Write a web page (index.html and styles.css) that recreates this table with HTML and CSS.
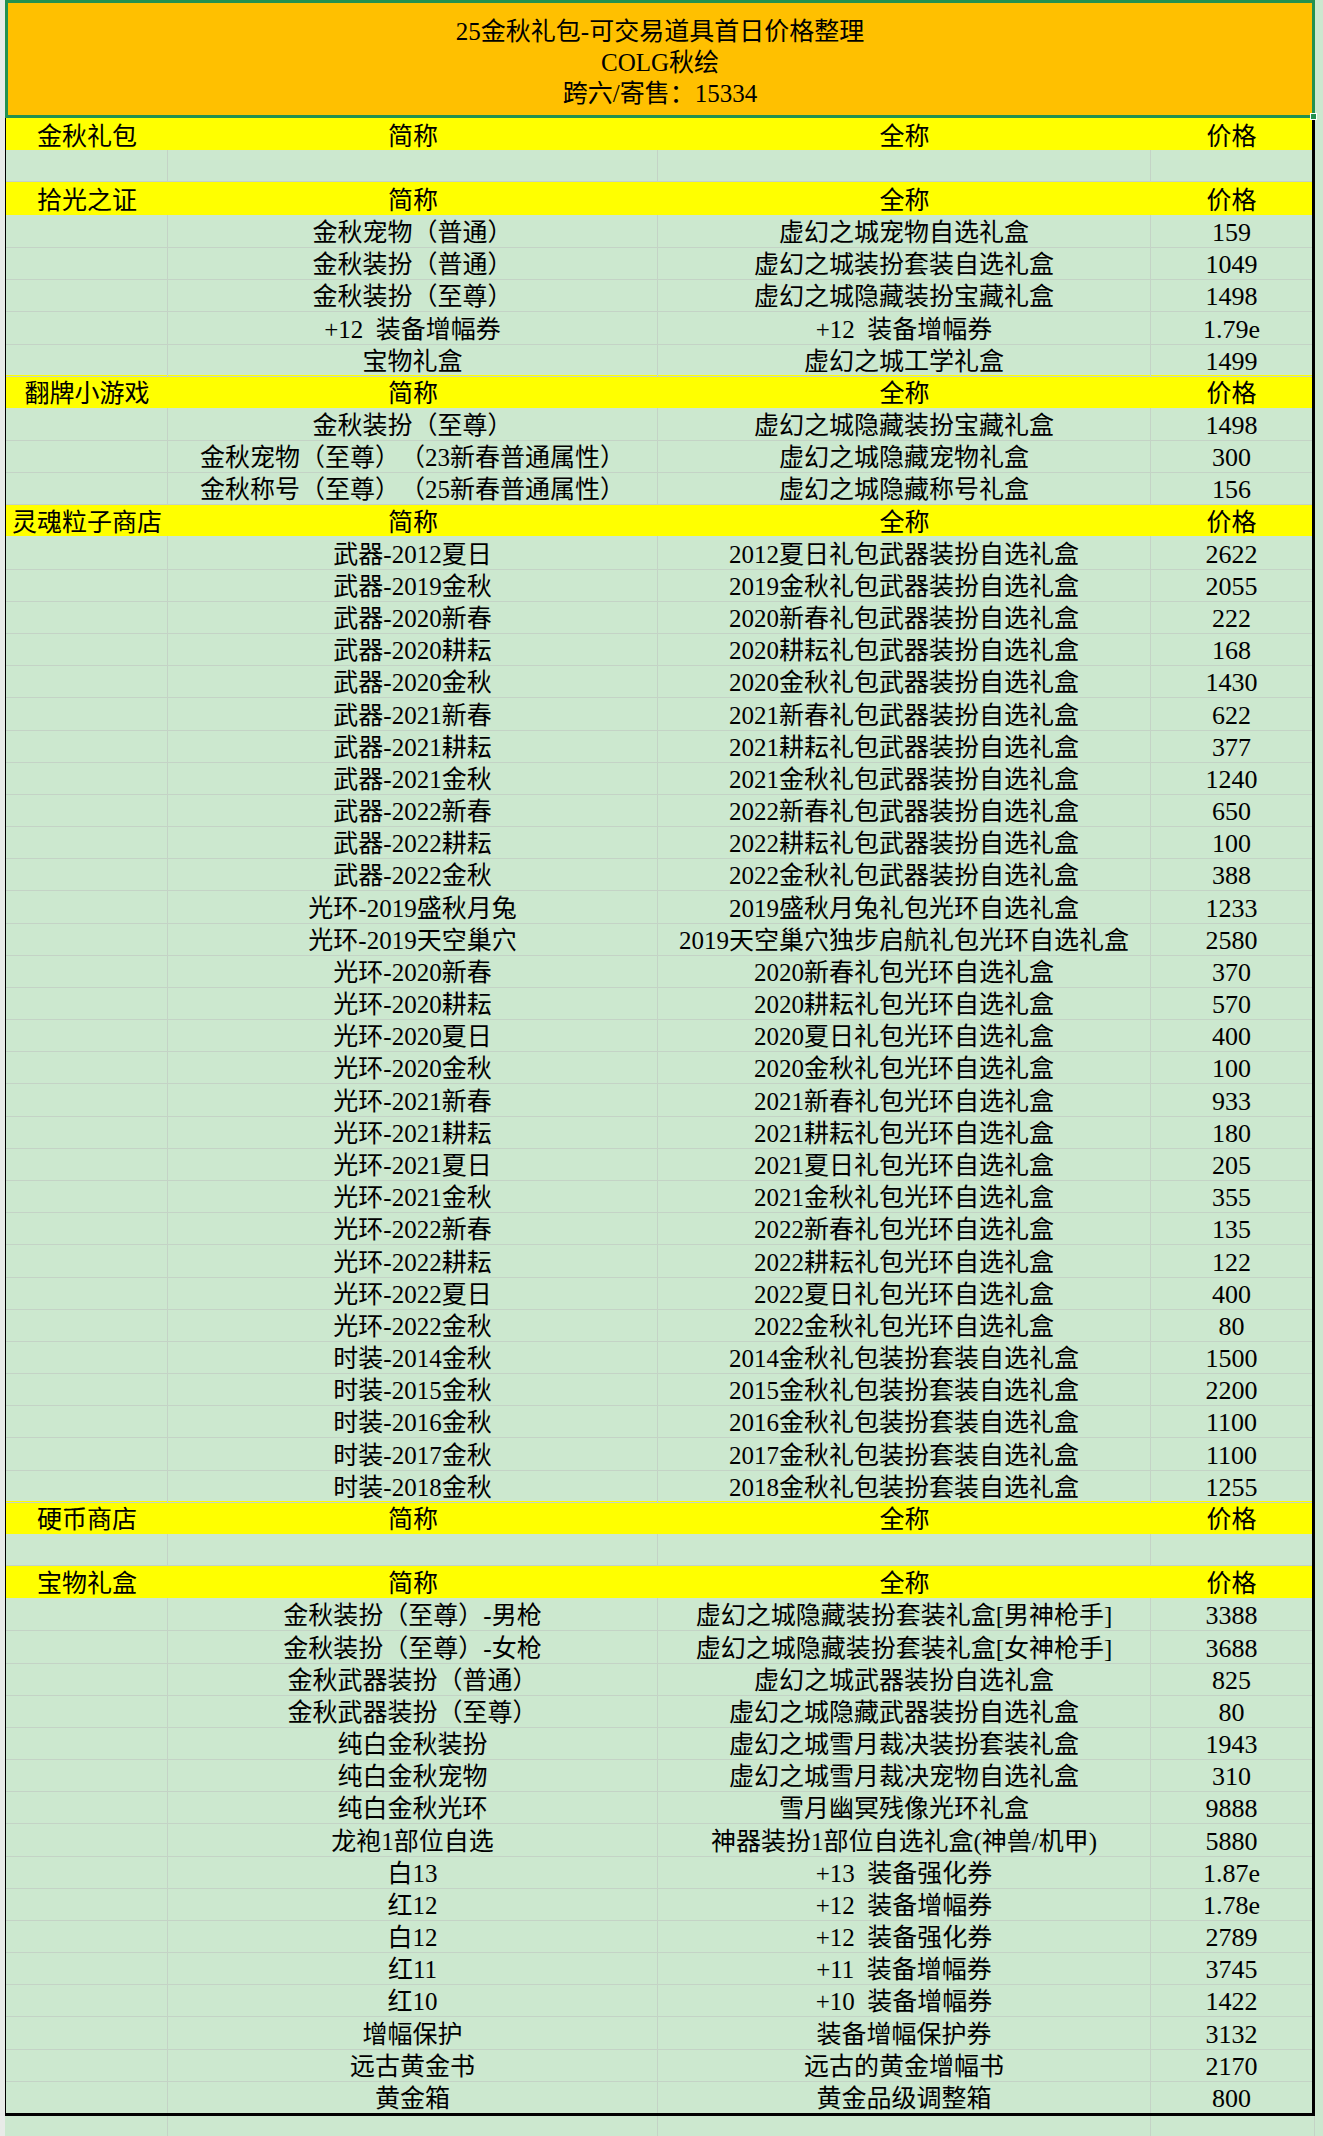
FILE: index.html
```html
<!DOCTYPE html>
<html lang="zh-CN">
<head>
<meta charset="utf-8">
<title>25金秋礼包-可交易道具首日价格整理</title>
<link rel="stylesheet" href="styles.css">
</head>
<body>
<div class="page">
  <div class="title-box">
    <div class="t">25金秋礼包-可交易道具首日价格整理</div>
    <div class="t">COLG秋绘</div>
    <div class="t">跨六/寄售：15334</div>
    <span class="handle"></span>
  </div>
  <div class="table">
    <div class="row sec"><div class="c">金秋礼包</div><div class="c">简称</div><div class="c">全称</div><div class="c">价格</div></div>
    <div class="row"><div class="c"></div><div class="c"></div><div class="c"></div><div class="c"></div></div>
    <div class="row sec"><div class="c">拾光之证</div><div class="c">简称</div><div class="c">全称</div><div class="c">价格</div></div>
    <div class="row"><div class="c"></div><div class="c">金秋宠物（普通）</div><div class="c">虚幻之城宠物自选礼盒</div><div class="c">159</div></div>
    <div class="row"><div class="c"></div><div class="c">金秋装扮（普通）</div><div class="c">虚幻之城装扮套装自选礼盒</div><div class="c">1049</div></div>
    <div class="row"><div class="c"></div><div class="c">金秋装扮（至尊）</div><div class="c">虚幻之城隐藏装扮宝藏礼盒</div><div class="c">1498</div></div>
    <div class="row"><div class="c"></div><div class="c">+12 装备增幅券</div><div class="c">+12 装备增幅券</div><div class="c">1.79e</div></div>
    <div class="row"><div class="c"></div><div class="c">宝物礼盒</div><div class="c">虚幻之城工学礼盒</div><div class="c">1499</div></div>
    <div class="row sec"><div class="c">翻牌小游戏</div><div class="c">简称</div><div class="c">全称</div><div class="c">价格</div></div>
    <div class="row"><div class="c"></div><div class="c">金秋装扮（至尊）</div><div class="c">虚幻之城隐藏装扮宝藏礼盒</div><div class="c">1498</div></div>
    <div class="row"><div class="c"></div><div class="c">金秋宠物（至尊）（23新春普通属性）</div><div class="c">虚幻之城隐藏宠物礼盒</div><div class="c">300</div></div>
    <div class="row"><div class="c"></div><div class="c">金秋称号（至尊）（25新春普通属性）</div><div class="c">虚幻之城隐藏称号礼盒</div><div class="c">156</div></div>
    <div class="row sec"><div class="c">灵魂粒子商店</div><div class="c">简称</div><div class="c">全称</div><div class="c">价格</div></div>
    <div class="row"><div class="c"></div><div class="c">武器-2012夏日</div><div class="c">2012夏日礼包武器装扮自选礼盒</div><div class="c">2622</div></div>
    <div class="row"><div class="c"></div><div class="c">武器-2019金秋</div><div class="c">2019金秋礼包武器装扮自选礼盒</div><div class="c">2055</div></div>
    <div class="row"><div class="c"></div><div class="c">武器-2020新春</div><div class="c">2020新春礼包武器装扮自选礼盒</div><div class="c">222</div></div>
    <div class="row"><div class="c"></div><div class="c">武器-2020耕耘</div><div class="c">2020耕耘礼包武器装扮自选礼盒</div><div class="c">168</div></div>
    <div class="row"><div class="c"></div><div class="c">武器-2020金秋</div><div class="c">2020金秋礼包武器装扮自选礼盒</div><div class="c">1430</div></div>
    <div class="row"><div class="c"></div><div class="c">武器-2021新春</div><div class="c">2021新春礼包武器装扮自选礼盒</div><div class="c">622</div></div>
    <div class="row"><div class="c"></div><div class="c">武器-2021耕耘</div><div class="c">2021耕耘礼包武器装扮自选礼盒</div><div class="c">377</div></div>
    <div class="row"><div class="c"></div><div class="c">武器-2021金秋</div><div class="c">2021金秋礼包武器装扮自选礼盒</div><div class="c">1240</div></div>
    <div class="row"><div class="c"></div><div class="c">武器-2022新春</div><div class="c">2022新春礼包武器装扮自选礼盒</div><div class="c">650</div></div>
    <div class="row"><div class="c"></div><div class="c">武器-2022耕耘</div><div class="c">2022耕耘礼包武器装扮自选礼盒</div><div class="c">100</div></div>
    <div class="row"><div class="c"></div><div class="c">武器-2022金秋</div><div class="c">2022金秋礼包武器装扮自选礼盒</div><div class="c">388</div></div>
    <div class="row"><div class="c"></div><div class="c">光环-2019盛秋月兔</div><div class="c">2019盛秋月兔礼包光环自选礼盒</div><div class="c">1233</div></div>
    <div class="row"><div class="c"></div><div class="c">光环-2019天空巢穴</div><div class="c">2019天空巢穴独步启航礼包光环自选礼盒</div><div class="c">2580</div></div>
    <div class="row"><div class="c"></div><div class="c">光环-2020新春</div><div class="c">2020新春礼包光环自选礼盒</div><div class="c">370</div></div>
    <div class="row"><div class="c"></div><div class="c">光环-2020耕耘</div><div class="c">2020耕耘礼包光环自选礼盒</div><div class="c">570</div></div>
    <div class="row"><div class="c"></div><div class="c">光环-2020夏日</div><div class="c">2020夏日礼包光环自选礼盒</div><div class="c">400</div></div>
    <div class="row"><div class="c"></div><div class="c">光环-2020金秋</div><div class="c">2020金秋礼包光环自选礼盒</div><div class="c">100</div></div>
    <div class="row"><div class="c"></div><div class="c">光环-2021新春</div><div class="c">2021新春礼包光环自选礼盒</div><div class="c">933</div></div>
    <div class="row"><div class="c"></div><div class="c">光环-2021耕耘</div><div class="c">2021耕耘礼包光环自选礼盒</div><div class="c">180</div></div>
    <div class="row"><div class="c"></div><div class="c">光环-2021夏日</div><div class="c">2021夏日礼包光环自选礼盒</div><div class="c">205</div></div>
    <div class="row"><div class="c"></div><div class="c">光环-2021金秋</div><div class="c">2021金秋礼包光环自选礼盒</div><div class="c">355</div></div>
    <div class="row"><div class="c"></div><div class="c">光环-2022新春</div><div class="c">2022新春礼包光环自选礼盒</div><div class="c">135</div></div>
    <div class="row"><div class="c"></div><div class="c">光环-2022耕耘</div><div class="c">2022耕耘礼包光环自选礼盒</div><div class="c">122</div></div>
    <div class="row"><div class="c"></div><div class="c">光环-2022夏日</div><div class="c">2022夏日礼包光环自选礼盒</div><div class="c">400</div></div>
    <div class="row"><div class="c"></div><div class="c">光环-2022金秋</div><div class="c">2022金秋礼包光环自选礼盒</div><div class="c">80</div></div>
    <div class="row"><div class="c"></div><div class="c">时装-2014金秋</div><div class="c">2014金秋礼包装扮套装自选礼盒</div><div class="c">1500</div></div>
    <div class="row"><div class="c"></div><div class="c">时装-2015金秋</div><div class="c">2015金秋礼包装扮套装自选礼盒</div><div class="c">2200</div></div>
    <div class="row"><div class="c"></div><div class="c">时装-2016金秋</div><div class="c">2016金秋礼包装扮套装自选礼盒</div><div class="c">1100</div></div>
    <div class="row"><div class="c"></div><div class="c">时装-2017金秋</div><div class="c">2017金秋礼包装扮套装自选礼盒</div><div class="c">1100</div></div>
    <div class="row"><div class="c"></div><div class="c">时装-2018金秋</div><div class="c">2018金秋礼包装扮套装自选礼盒</div><div class="c">1255</div></div>
    <div class="row sec"><div class="c">硬币商店</div><div class="c">简称</div><div class="c">全称</div><div class="c">价格</div></div>
    <div class="row"><div class="c"></div><div class="c"></div><div class="c"></div><div class="c"></div></div>
    <div class="row sec"><div class="c">宝物礼盒</div><div class="c">简称</div><div class="c">全称</div><div class="c">价格</div></div>
    <div class="row"><div class="c"></div><div class="c">金秋装扮（至尊）-男枪</div><div class="c">虚幻之城隐藏装扮套装礼盒[男神枪手]</div><div class="c">3388</div></div>
    <div class="row"><div class="c"></div><div class="c">金秋装扮（至尊）-女枪</div><div class="c">虚幻之城隐藏装扮套装礼盒[女神枪手]</div><div class="c">3688</div></div>
    <div class="row"><div class="c"></div><div class="c">金秋武器装扮（普通）</div><div class="c">虚幻之城武器装扮自选礼盒</div><div class="c">825</div></div>
    <div class="row"><div class="c"></div><div class="c">金秋武器装扮（至尊）</div><div class="c">虚幻之城隐藏武器装扮自选礼盒</div><div class="c">80</div></div>
    <div class="row"><div class="c"></div><div class="c">纯白金秋装扮</div><div class="c">虚幻之城雪月裁决装扮套装礼盒</div><div class="c">1943</div></div>
    <div class="row"><div class="c"></div><div class="c">纯白金秋宠物</div><div class="c">虚幻之城雪月裁决宠物自选礼盒</div><div class="c">310</div></div>
    <div class="row"><div class="c"></div><div class="c">纯白金秋光环</div><div class="c">雪月幽冥残像光环礼盒</div><div class="c">9888</div></div>
    <div class="row"><div class="c"></div><div class="c">龙袍1部位自选</div><div class="c">神器装扮1部位自选礼盒(神兽/机甲)</div><div class="c">5880</div></div>
    <div class="row"><div class="c"></div><div class="c">白13</div><div class="c">+13 装备强化券</div><div class="c">1.87e</div></div>
    <div class="row"><div class="c"></div><div class="c">红12</div><div class="c">+12 装备增幅券</div><div class="c">1.78e</div></div>
    <div class="row"><div class="c"></div><div class="c">白12</div><div class="c">+12 装备强化券</div><div class="c">2789</div></div>
    <div class="row"><div class="c"></div><div class="c">红11</div><div class="c">+11 装备增幅券</div><div class="c">3745</div></div>
    <div class="row"><div class="c"></div><div class="c">红10</div><div class="c">+10 装备增幅券</div><div class="c">1422</div></div>
    <div class="row"><div class="c"></div><div class="c">增幅保护</div><div class="c">装备增幅保护券</div><div class="c">3132</div></div>
    <div class="row"><div class="c"></div><div class="c">远古黄金书</div><div class="c">远古的黄金增幅书</div><div class="c">2170</div></div>
    <div class="row last"><div class="c"></div><div class="c">黄金箱</div><div class="c">黄金品级调整箱</div><div class="c">800</div></div>
  </div>
  <div class="row filler"><div class="c"></div><div class="c"></div><div class="c"></div><div class="c"></div></div>
</div>
</body>
</html>
```

FILE: styles.css
```css
html, body {
  margin: 0;
  padding: 0;
}

body {
  width: 1323px;
  height: 2136px;
  overflow: hidden;
  background: linear-gradient(to right, #e8ebe8 0, #e8ebe8 5px, #cce8cf 5px);
  font-family: "Liberation Serif", "Noto Sans CJK SC", serif;
  font-size: 25px;
  color: #000;
  text-spacing-trim: space-all;
  word-spacing: 0.25em;
}

.page {
  margin-left: 5px;
  width: 1310px;
}

.title-box {
  position: relative;
  box-sizing: border-box;
  width: 1310px;
  height: 118px;
  background: #ffc000;
  border: 3px solid #23914f;
  padding-top: 13px;
  display: flex;
  flex-direction: column;
  align-items: center;
}

.title-box .t {
  line-height: 31px;
  height: 31px;
  white-space: nowrap;
}

.handle {
  position: absolute;
  right: -5px;
  bottom: -5px;
  width: 5px;
  height: 5px;
  background: #23914f;
  border: 1px solid #fff;
}

.table {
  box-sizing: border-box;
  width: 1310px;
  border-left: 1px solid #000;
  border-right: 3px solid #000;
  border-bottom: 3px solid #000;
}

.row {
  display: grid;
  grid-template-columns: 162px 490px 493px 161px;
  height: 32.18px;
  background: #cce8cf;
}

.row .c {
  box-sizing: border-box;
  height: 100%;
  border-right: 1px solid #c4d3c6;
  border-bottom: 1px solid #c4d3c6;
  text-align: center;
  white-space: nowrap;
  line-height: 29px;
  padding-top: 3.5px;
  overflow: visible;
}

.row .c:last-child {
  border-right: none;
  font-size: 26px;
}

.row.sec .c:last-child {
  font-size: 25px;
}

.row.sec {
  background: #ffff00;
}

.row.sec .c {
  border-right: none;
  border-bottom: none;
}

.row.last .c {
  border-bottom: none;
}

.row.filler {
  grid-template-columns: 163px 490px 493px 164px;
  height: 24px;
}

.row.filler .c {
  border-bottom: none;
}

.row.filler .c:last-child {
  border-right: 1px solid #c4d3c6;
}
```
